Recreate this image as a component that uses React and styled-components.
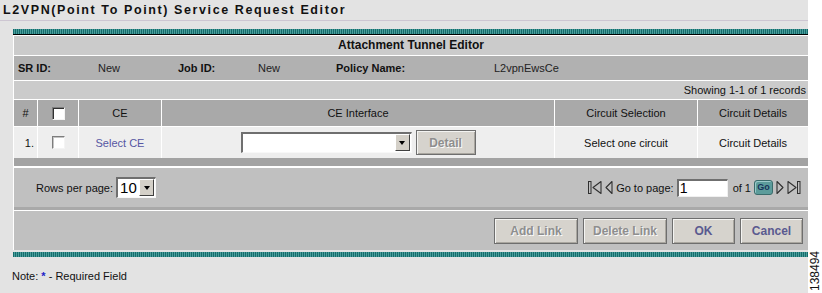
import React from "react";
import styled, { createGlobalStyle } from "styled-components";

const GlobalStyle = createGlobalStyle`
  html, body {
    margin: 0;
    padding: 0;
    background: #e3e3e3;
  }
  body {
    font-family: "Liberation Sans", Arial, sans-serif;
    font-size: 11px;
    color: #111;
  }
`;

const Page = styled.div`
  display: flex;
  height: 293px;
  overflow: hidden;
`;

const Main = styled.div`
  width: 808px;
  display: flex;
  flex-direction: column;
  background: #e3e3e3;
`;

const SideStrip = styled.div`
  width: 14px;
  background: #fff;
  display: flex;
  align-items: flex-end;
  justify-content: center;
  padding-bottom: 2px;
  box-sizing: border-box;
`;

const FigureNumber = styled.span`
  writing-mode: vertical-rl;
  transform: rotate(180deg);
  font-size: 12px;
  line-height: 12px;
  color: #111;
`;

const PageTitle = styled.div`
  height: 20px;
  line-height: 20px;
  padding-left: 3px;
  border-bottom: 1px solid #cdc6d2;
  font-weight: bold;
  font-size: 12.5px;
  letter-spacing: 1.6px;
  color: #111;
`;

const Content = styled.div`
  padding: 8px 0 0 13px;
`;

const Panel = styled.div`
  width: 795px;
`;

const TealBar = styled.div`
  height: 5px;
  background: repeating-linear-gradient(90deg, #146d6c 0 1px, #4b9d9c 1px 2px);
  border-bottom: ${(p) => (p.$top ? "1px solid #000" : "none")};
  margin-top: ${(p) => (p.$top ? "0" : "2px")};
`;

const Body = styled.div`
  border-left: 1px solid #fff;
`;

const TitleRow = styled.div`
  height: 19px;
  line-height: 19px;
  border-top: 1px solid #fff;
  background: #cbcbcb;
  text-align: center;
  font-weight: bold;
  font-size: 12px;
`;

const InfoRow = styled.div`
  height: 24px;
  border-top: 1px solid #fff;
  background: #b1b1b1;
  display: grid;
  grid-template-columns: 80px 80px 80px 78px 158px 1fr;
  align-items: center;
  padding-left: 4px;
`;

const InfoLabel = styled.span`
  font-weight: bold;
`;

const InfoValue = styled.span`
  color: #222;
`;

const ShowingRow = styled.div`
  height: 18px;
  line-height: 18px;
  border-top: 1px solid #fff;
  background: #cbcbcb;
  text-align: right;
  padding-right: 2px;
`;

const GridRow = styled.div`
  display: grid;
  grid-template-columns: 23px 40px 82px 392px 142px 1fr;
  column-gap: 1px;
  background: #fff;
  border-top: 1px solid #fff;
  height: ${(p) => p.$h}px;
  box-sizing: content-box;
`;

const Cell = styled.div`
  background: ${(p) => (p.$head ? "#a9a9a9" : "#eeeeee")};
  display: flex;
  align-items: center;
  justify-content: ${(p) => p.$justify || "center"};
  gap: 4px;
  padding-right: ${(p) => (p.$justify === "flex-end" ? "3px" : "0")};
`;

const CheckBox = styled.span`
  width: 11px;
  height: 11px;
  background: #fff;
  border-top: 1px solid #7d7d7d;
  border-left: 1px solid #7d7d7d;
  border-right: 1px solid #f4f4f4;
  border-bottom: 1px solid #f4f4f4;
  box-shadow: inset 1px 1px 0 ${(p) => (p.$dark ? "#303030" : "#c4c4c4")};
`;

const LinkText = styled.span`
  color: #5656a3;
`;

const SelectBox = styled.div`
  width: ${(p) => p.$w}px;
  height: ${(p) => p.$h}px;
  box-sizing: border-box;
  background: #fff;
  border-top: 2px solid #6f6f6f;
  border-left: 2px solid #6f6f6f;
  border-right: 1px solid #f8f8f8;
  border-bottom: 1px solid #f8f8f8;
  display: flex;
  align-items: stretch;
  justify-content: space-between;
  padding: 0 1px 1px 0;
`;

const SelectValue = styled.span`
  font-size: 15px;
  line-height: 17px;
  padding-left: 2px;
  color: #000;
`;

const ArrowButton = styled.span`
  width: 15px;
  background: #d4d0c8;
  border-top: 1px solid #fff;
  border-left: 1px solid #fff;
  border-right: 1px solid #404040;
  border-bottom: 1px solid #404040;
  box-sizing: border-box;
  display: flex;
  align-items: center;
  justify-content: center;
  &::after {
    content: "";
    border-left: 3.5px solid transparent;
    border-right: 3.5px solid transparent;
    border-top: 4px solid #000;
  }
`;

const Button = styled.button`
  width: ${(p) => p.$w}px;
  height: ${(p) => p.$h || 26}px;
  background: #d6d3cd;
  border: 1px solid #6e6e6e;
  box-shadow: inset 1px 1px 0 #f4f4f2, inset -1px -1px 0 #a9a69f;
  font-family: "Liberation Sans", Arial, sans-serif;
  font-weight: bold;
  font-size: 12px;
  color: ${(p) => (p.$disabled ? "#8e8e8e" : "#5a5a90")};
  text-shadow: ${(p) => (p.$disabled ? "1px 1px 0 #fafafa" : "none")};
  padding: 0;
  cursor: default;
`;

const Separator = styled.div`
  height: 8px;
  background: #a3a3a3;
  border-bottom: 2px solid #fff;
`;

const PagerRow = styled.div`
  height: 39px;
  background: #c0c0c0;
  display: flex;
  align-items: center;
  justify-content: space-between;
  padding: 0 7px 0 22px;
  border-bottom: 3px solid #a9a9a9;
`;

const PagerGroup = styled.div`
  display: flex;
  align-items: center;
  gap: ${(p) => p.$gap || 3}px;
`;

const PageInput = styled.div`
  width: 51px;
  height: 18px;
  box-sizing: border-box;
  background: #fff;
  border-top: 2px solid #6f6f6f;
  border-left: 2px solid #6f6f6f;
  border-right: 1px solid #f0f0f0;
  border-bottom: 1px solid #f0f0f0;
  font-size: 14px;
  line-height: 15px;
  padding-left: 1px;
  color: #000;
`;

const GoButton = styled.span`
  width: 19px;
  height: 15px;
  box-sizing: border-box;
  border-radius: 3px;
  background: #5c9c9b;
  border: 1px solid #3b6c6c;
  box-shadow: inset 1px 1px 0 #9ccaca;
  font-size: 9px;
  font-weight: bold;
  line-height: 13px;
  text-align: center;
  color: #17345a;
`;

const ButtonRow = styled.div`
  height: 39px;
  border-top: 1px solid #fff;
  background: #c0c0c0;
  display: flex;
  align-items: center;
  justify-content: flex-end;
  gap: 5px;
  padding-right: 5px;
`;

const Note = styled.div`
  padding: 13px 0 0 12px;
  font-size: 11px;
  color: #111;
`;

const Star = styled.span`
  color: #2323c8;
  font-weight: bold;
`;

function NavIcon({ dir, bar }) {
  const left = dir === "left";
  return (
    <svg width={bar ? 14 : 8} height="15" viewBox={bar ? "0 0 14 15" : "0 0 8 15"}>
      {bar && (
        <rect x={left ? 0.5 : 10.5} y="1.5" width="2.5" height="12" fill="none" stroke="#2f2f2f" strokeWidth="1" />
      )}
      <polygon
        points={
          left
            ? bar ? "13,1.5 5,7.5 13,13.5" : "7,1.5 1,7.5 7,13.5"
            : bar ? "1,1.5 9,7.5 1,13.5" : "1,1.5 7,7.5 1,13.5"
        }
        fill="none"
        stroke="#2f2f2f"
        strokeWidth="1.1"
        strokeLinejoin="round"
      />
    </svg>
  );
}

export default function App() {
  return (
    <Page>
      <GlobalStyle />
      <Main>
        <PageTitle>L2VPN(Point To Point) Service Request Editor</PageTitle>
        <Content>
          <Panel>
            <TealBar $top />
            <Body>
              <TitleRow>Attachment Tunnel Editor</TitleRow>
              <InfoRow>
                <InfoLabel>SR ID:</InfoLabel>
                <InfoValue>New</InfoValue>
                <InfoLabel>Job ID:</InfoLabel>
                <InfoValue>New</InfoValue>
                <InfoLabel>Policy Name:</InfoLabel>
                <InfoValue>L2vpnEwsCe</InfoValue>
              </InfoRow>
              <ShowingRow>Showing 1-1 of 1 records</ShowingRow>
              <GridRow $h={26}>
                <Cell $head>#</Cell>
                <Cell $head>
                  <CheckBox $dark />
                </Cell>
                <Cell $head>CE</Cell>
                <Cell $head>CE Interface</Cell>
                <Cell $head>Circuit Selection</Cell>
                <Cell $head>Circuit Details</Cell>
              </GridRow>
              <GridRow $h={31}>
                <Cell $justify="flex-end">1.</Cell>
                <Cell>
                  <CheckBox />
                </Cell>
                <Cell>
                  <LinkText>Select CE</LinkText>
                </Cell>
                <Cell>
                  <SelectBox $w={171} $h={21}>
                    <span />
                    <ArrowButton />
                  </SelectBox>
                  <Button $w={60} $h={25} $disabled>
                    Detail
                  </Button>
                </Cell>
                <Cell>Select one circuit</Cell>
                <Cell>Circuit Details</Cell>
              </GridRow>
              <Separator />
              <PagerRow>
                <PagerGroup $gap={3}>
                  <span>Rows per page:</span>
                  <SelectBox $w={40} $h={21}>
                    <SelectValue>10</SelectValue>
                    <ArrowButton />
                  </SelectBox>
                </PagerGroup>
                <PagerGroup $gap={3}>
                  <NavIcon dir="left" bar />
                  <NavIcon dir="left" />
                  <span>Go to page:</span>
                  <PageInput>1</PageInput>
                  <span style={{ marginLeft: 2 }}>of 1</span>
                  <GoButton>Go</GoButton>
                  <NavIcon dir="right" />
                  <NavIcon dir="right" bar />
                </PagerGroup>
              </PagerRow>
              <ButtonRow>
                <Button $w={84} $disabled>
                  Add Link
                </Button>
                <Button $w={84} $disabled>
                  Delete Link
                </Button>
                <Button $w={63}>OK</Button>
                <Button $w={63}>Cancel</Button>
              </ButtonRow>
            </Body>
            <TealBar />
          </Panel>
        </Content>
        <Note>
          Note: <Star>*</Star> - Required Field
        </Note>
      </Main>
      <SideStrip>
        <FigureNumber>138494</FigureNumber>
      </SideStrip>
    </Page>
  );
}
